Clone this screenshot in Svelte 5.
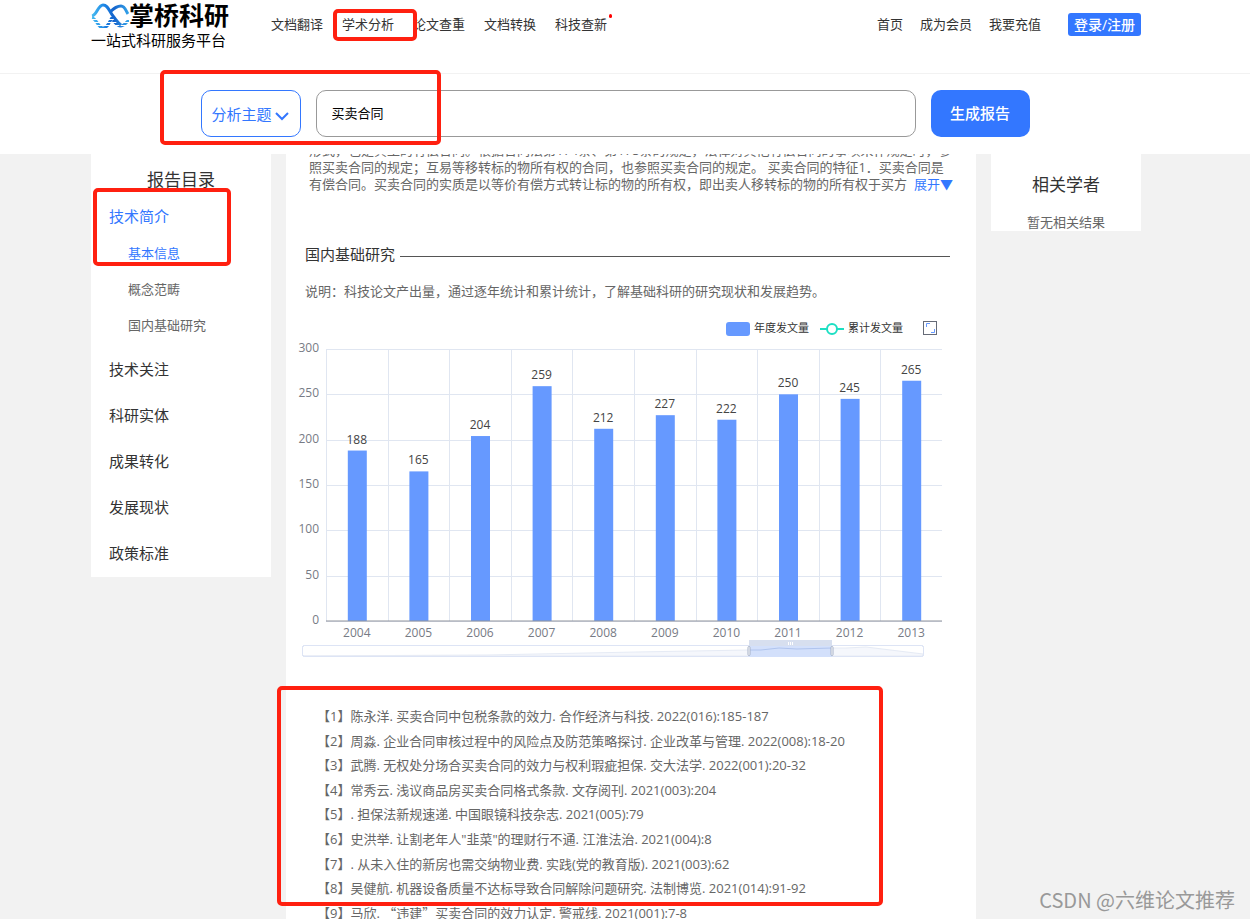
<script>
  const nav = ['文档翻译', '学术分析', '论文查重', '文档转换', '科技查新'];
  const account = ['首页', '成为会员', '我要充值'];
  const subItems = ['基本信息', '概念范畴', '国内基础研究'];
  const sections = ['技术关注', '科研实体', '成果转化', '发展现状', '政策标准'];
  const summary = [
    '形式，也是典型的有偿合同。根据合同法第174条、第175条的规定，法律对其他有偿合同的事项未作规定时，参',
    '照买卖合同的规定；互易等移转标的物所有权的合同，也参照买卖合同的规定。 买卖合同的特征1．买卖合同是',
    '有偿合同。买卖合同的实质是以等价有偿方式转让标的物的所有权，即出卖人移转标的物的所有权于买方'
  ];
  const references = [
    '陈永洋. 买卖合同中包税条款的效力. 合作经济与科技. 2022(016):185-187',
    '周淼. 企业合同审核过程中的风险点及防范策略探讨. 企业改革与管理. 2022(008):18-20',
    '武腾. 无权处分场合买卖合同的效力与权利瑕疵担保. 交大法学. 2022(001):20-32',
    '常秀云. 浅议商品房买卖合同格式条款. 文存阅刊. 2021(003):204',
    '. 担保法新规速递. 中国眼镜科技杂志. 2021(005):79',
    '史洪举. 让割老年人"韭菜"的理财行不通. 江淮法治. 2021(004):8',
    '. 从未入住的新房也需交纳物业费. 实践(党的教育版). 2021(003):62',
    '吴健航. 机器设备质量不达标导致合同解除问题研究. 法制博览. 2021(014):91-92',
    '马欣. “违建”买卖合同的效力认定. 警戒线. 2021(001):7-8'
  ];

  const papers = [
    [2004, 188], [2005, 165], [2006, 204], [2007, 259], [2008, 212],
    [2009, 227], [2010, 222], [2011, 250], [2012, 245], [2013, 265]
  ];
  const ticks = [0, 50, 100, 150, 200, 250, 300];
  const plot = { left: 40, right: 656, top: 47, bottom: 319 };
  const step = (plot.right - plot.left) / papers.length;
  const yOf = (v) => plot.bottom - (v / 300) * (plot.bottom - plot.top);
  const centre = (i) => plot.left + step * (i + 0.5);

  let keyword = $state('买卖合同');
</script>

<div class="page">
  <header class="top">
    <div class="wrap bar">
      <a class="logo" href="#home">
        <span class="brand">
          <svg width="38" height="28" viewBox="0 0 38 28" fill="none" aria-hidden="true">
            <defs>
              <linearGradient id="wave" gradientUnits="userSpaceOnUse" x1="0" x2="38" y1="0" y2="0">
                <stop offset="0" stop-color="#4cc0f0" />
                <stop offset="0.35" stop-color="#1d86e6" />
                <stop offset="0.6" stop-color="#1463cc" />
                <stop offset="1" stop-color="#35a5ea" />
              </linearGradient>
              <pattern id="stripes" width="38" height="3" patternUnits="userSpaceOnUse">
                <rect width="38" height="2" fill="#fff" />
              </pattern>
              <mask id="striped"><rect width="38" height="28" fill="url(#stripes)" /></mask>
            </defs>
            <g stroke="url(#wave)" stroke-width="3">
              <path d="M1 14C6 13 7 3 12 3s6 6 10 11 5 7 8 9" />
              <path d="M19 10c4-4 7-6 11-6s5 5 7 8" />
              <path d="M1 16c5 1 6 10 11 10s6-6 10-12M22 18c3 4 5 6 8 6s5-3 8-6" mask="url(#striped)" />
            </g>
          </svg>
          <span>掌桥科研</span>
        </span>
        <span class="slogan">一站式科研服务平台</span>
      </a>
      <nav class="menu">
        {#each nav as item, i}
          <a href="#nav{i}">{item}{#if i === 4}<i class="dot"></i>{/if}</a>
        {/each}
      </nav>
      <nav class="account">
        {#each account as item, i}
          <a href="#account{i}">{item}</a>
        {/each}
      </nav>
      <button class="login">登录/注册</button>
    </div>
  </header>

  <form class="search" onsubmit={(e) => e.preventDefault()}>
    <div class="topic">
      <select aria-label="分析类型"><option>分析主题</option></select>
      <svg width="14" height="10" viewBox="0 0 14 10" fill="none" aria-hidden="true">
        <path d="M1 2l6 6 6-6" stroke="#3377ff" stroke-width="2" />
      </svg>
    </div>
    <input type="text" aria-label="关键词" bind:value={keyword} />
    <button>生成报告</button>
  </form>

  <div class="content">
    <div class="wrap columns">
      <aside class="toc">
        <h2>报告目录</h2>
        <a class="item active" href="#intro">技术简介</a>
        <div class="subs">
          {#each subItems as item, i}
            <a class:active={i === 0} href="#sub{i}">{item}</a>
          {/each}
        </div>
        {#each sections as item, i}
          <a class="item" href="#section{i}">{item}</a>
        {/each}
      </aside>

      <main>
        <p class="summary">
          {#each summary as line, i}
            <span>{line}{#if i === 2}<a href="#more">展开▼</a>{/if}</span>
          {/each}
        </p>
        <h3>国内基础研究</h3>
        <p class="note">说明：科技论文产出量，通过逐年统计和累计统计，了解基础科研的研究现状和发展趋势。</p>

        <svg class="chart" viewBox="0 0 690 362" role="img" aria-label="年度发文量">
          <rect x="440" y="20" width="24" height="14" rx="3" fill="#6699ff" />
          <text x="468" y="30" class="legend">年度发文量</text>
          <path d="M534 27h24" stroke="#1ddfc3" stroke-width="2" />
          <circle cx="546" cy="27" r="5" fill="#fff" stroke="#1ddfc3" stroke-width="2" />
          <text x="562" y="30" class="legend">累计发文量</text>
          <rect x="637.5" y="19.5" width="13" height="13" fill="#fff" stroke="#666b77" />
          <path d="M640.5 25v-3.500h3.500M648.500 27v3.500h-3.500" fill="none" stroke="#6699ff" />

          {#each ticks as t}
            <line x1={plot.left} x2={plot.right} y1={Math.round(yOf(t)) + 0.5} y2={Math.round(yOf(t)) + 0.5} stroke="#e0e6f1" />
            <text x="33" y={yOf(t) + 3} class="tick" text-anchor="end">{t}</text>
          {/each}
          {#each papers as _, i}
            <line x1={Math.round(plot.left + step * i) + 0.5} x2={Math.round(plot.left + step * i) + 0.5} y1={plot.top} y2={plot.bottom} stroke="#e0e6f1" />
          {/each}
          {#each papers as [year, count], i}
            <rect x={centre(i) - 9} y={yOf(count)} width="19" height={plot.bottom - yOf(count)} fill="#6699ff" />
            <text x={centre(i)} y={yOf(count) - 7} class="value" text-anchor="middle">{count}</text>
            <text x={centre(i)} y="335" class="tick" text-anchor="middle">{year}</text>
          {/each}
          <line x1={plot.left} x2={plot.right} y1="319" y2="319" stroke="#8f929b" stroke-width="1" />

          <rect x="16.5" y="343.5" width="621" height="11" rx="2" fill="#fff" stroke="#dde4f5" />
          <path d="M17 354L200 353 350 350 462 348 500 346 560 346 580 345 637 352V354z" fill="#f5f7fc" stroke="#e6ebf5" />
          <rect x="16.5" y="343.5" width="621" height="11" rx="2" fill="none" stroke="#dde4f5" />
          <rect x="463" y="338" width="83" height="6" fill="#d7dfef" />
          <rect x="463" y="344" width="83" height="11" fill="#d3e0fb" />
          <path d="M463 348l12 0 18-2 18 1 35-1" fill="none" stroke="#b0c4ee" />
          <path d="M502.5 340v3M504.5 340v3M506.5 340v3" stroke="#fff" />
          <rect x="462" y="344.5" width="2" height="9" rx="1" fill="#fff" stroke="#a5b0c6" />
          <rect x="545" y="344.5" width="2" height="9" rx="1" fill="#fff" stroke="#a5b0c6" />
        </svg>

        <ol class="refs">
          {#each references as ref, i}
            <li>【{i + 1}】{#each ref.split(/([“”])/) as part}{#if part === '“' || part === '”'}<span class="quote">{part}</span>{:else}{part}{/if}{/each}</li>
          {/each}
        </ol>
      </main>

      <aside class="scholars">
        <h2>相关学者</h2>
        <p>暂无相关结果</p>
      </aside>
    </div>
  </div>

  <div class="marks" aria-hidden="true">
    <div class="wrap">
      <i class="mark nav-mark"></i>
      <i class="mark search-mark"></i>
      <i class="mark toc-mark"></i>
      <i class="mark refs-mark"></i>
    </div>
  </div>
  <div class="watermark">CSDN @六维论文推荐</div>
</div>

<style>
  :global(body) { background: #f2f2f2; }
  .page {
    position: relative;
    display: flex;
    flex-direction: column;
    height: 100vh;
    overflow: hidden;
    font: 13px/18px "Open Sans", "Noto Sans CJK SC", sans-serif;
    color: #333;
  }
  .page * { box-sizing: border-box; }
  a { color: inherit; text-decoration: none; }
  h2, h3, p, ol { margin: 0; padding: 0; font-weight: 400; }
  button, input, select { font: inherit; }
  button { border: 0; background: #3377ff; color: #fff; cursor: pointer; }

  .top, .content, .marks { padding-right: 18px; }
  .wrap { width: 100%; max-width: 1050px; margin: 0 auto; }

  .top { flex: none; background: #fff; border-bottom: 1px solid #f2f2f2; }
  .bar { display: flex; align-items: flex-start; height: 73px; }
  .logo { width: 140px; color: #000; white-space: nowrap; }
  .brand { display: flex; align-items: center; height: 31px; font-size: 25px; font-weight: 700; line-height: 31px; }
  .brand svg { flex: none; }
  .slogan { display: block; font-size: 15px; font-weight: 400; line-height: 18px; }
  .menu { display: flex; gap: 19px; margin-left: 40px; padding-top: 15px; white-space: nowrap; }
  .menu a { position: relative; }
  .dot { position: absolute; right: -5px; top: -1px; width: 3px; height: 4px; border-radius: 2px; background: #f00; }
  .account { display: flex; gap: 17px; margin-left: auto; padding-top: 15px; white-space: nowrap; }
  .login { width: 73px; height: 23px; margin: 13px 0 0 27px; padding: 0; border-radius: 3px; font-size: 14px; font-weight: 500; line-height: 20px; white-space: nowrap; }

  .search { flex: none; display: flex; justify-content: center; gap: 15px; height: 80px; padding: 16px 20px 0 0; background: #fff; }
  .topic { position: relative; width: 100px; height: 47px; }
  .topic select { appearance: none; width: 100%; height: 100%; padding: 0 10px; border: 1px solid #3377ff; border-radius: 10px; background: #fff; color: #3377ff; font-size: 15px; }
  .topic svg { position: absolute; right: 12px; top: 21px; pointer-events: none; }
  .search input { flex: 0 1 600px; min-width: 0; height: 47px; padding: 0 15px 2px; border: 1px solid #999; border-radius: 10px; background: #fff; color: #000; }
  .search button { width: 99px; height: 47px; padding-bottom: 2px; border-radius: 10px; font-size: 15px; font-weight: 500; }

  .content { flex: 1; min-height: 0; overflow: hidden; background: #f2f2f2; }
  .columns { display: grid; grid-template-columns: 180px minmax(0, 1fr) 150px; gap: 15px; align-items: start; }
  .toc, .scholars, main { background: #fff; }
  h2 { font-size: 17px; line-height: 26px; text-align: center; }

  .toc { padding: 13px 0 1px; }
  .toc .item { display: block; padding-left: 18px; font-size: 15px; line-height: 46px; }
  .subs { margin: -4px 0 3px; color: #666; }
  .subs a { display: block; padding-left: 37px; line-height: 36px; }
  .toc .active { color: #3377ff; }

  main { padding-bottom: 20px; color: #666; }
  .summary { margin-top: -12px; padding-left: 23px; line-height: 17px; white-space: nowrap; }
  .summary span { display: block; }
  .summary a { margin-left: 7px; color: #3377ff; }
  h3 { display: flex; align-items: center; gap: 5px; margin: 49px 26px 0 19px; font-size: 15px; line-height: 24px; color: #333; }
  h3::after { content: ""; flex: 1; height: 1px; margin-top: 4px; background: #555; }
  .note { margin: 15px 0 1px 19px; line-height: 20px; }

  .chart { display: block; width: 100%; }
  .legend { font-size: 11px; fill: #333; }
  .tick { font-size: 12px; fill: #777b85; }
  .value { font-size: 12px; fill: #444; }

  .refs { display: grid; grid-auto-rows: 1fr; align-items: center; height: 221px; margin-top: 40px; padding-left: 31px; list-style: none; white-space: nowrap; }
  .quote { font-family: "Noto Sans CJK SC", sans-serif; }

  .scholars { padding-top: 18px; text-align: center; }
  .scholars p { margin-top: 15px; color: #666; }

  .marks { position: absolute; inset: 0; pointer-events: none; }
  .marks .wrap { position: relative; }
  .mark { position: absolute; border: 4px solid #ff2010; border-radius: 5px; }
  .nav-mark { left: 242px; top: 9px; width: 84px; height: 32px; }
  .search-mark { left: 69px; top: 70px; width: 281px; height: 75px; }
  .toc-mark { left: 2px; top: 188px; width: 138px; height: 78px; }
  .refs-mark { left: 186px; top: 686px; width: 606px; height: 220px; }
  .watermark { position: absolute; right: 15px; bottom: 5px; font: 20px/28px "Noto Sans CJK SC", sans-serif; color: #999; }
</style>
